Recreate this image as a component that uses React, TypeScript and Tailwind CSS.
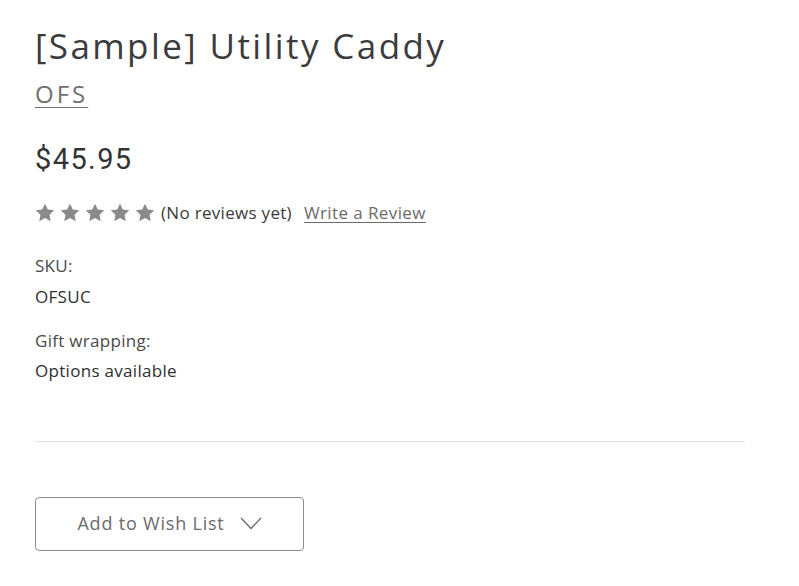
import React from "react";

function Star() {
  return (
    <svg width="20" height="19" viewBox="0 0 24 23" className="block">
      <path
        d="M12 0.8l3.4 7.1 7.8 1-5.7 5.4 1.4 7.7L12 18.3 5.1 22l1.4-7.7L0.8 8.9l7.8-1z"
        fill="#8a8a8a"
      />
    </svg>
  );
}

export default function App() {
  const heading = { fontFamily: "'Open Sans', 'DejaVu Sans', sans-serif" };
  const body = { fontFamily: "'Open Sans', 'Liberation Sans', sans-serif" };

  return (
    <div className="min-h-[586px] w-full bg-white pl-[35px] pr-[54px] pt-[23px]">
      <h1
        className="text-[35px] leading-[46px] font-normal tracking-[2.4px] text-[#3b3b3b]"
        style={heading}
      >
        [Sample] Utility Caddy
      </h1>
      <a
        href="#"
        className="mt-[10px] inline-block text-[24px] leading-[30px] tracking-[3px] text-[#707070] underline decoration-1 underline-offset-[4px]"
        style={heading}
      >
        OFS
      </a>

      <div
        className="mt-[33px] text-[29px] leading-[34px] tracking-[1.4px] text-[#333]"
        style={{ fontFamily: "Roboto, 'Liberation Sans', sans-serif" }}
      >
        $45.95
      </div>

      <div className="mt-[24px] flex items-center" style={body}>
        <div className="flex gap-[5px]">
          <Star />
          <Star />
          <Star />
          <Star />
          <Star />
        </div>
        <span className="ml-[6px] text-[17px] tracking-[0.3px] text-[#3b3b3b]">
          (No reviews yet)
        </span>
        <a
          href="#"
          className="ml-[12px] text-[17px] tracking-[0.4px] text-[#6b6b6b] underline underline-offset-[3px]"
        >
          Write a Review
        </a>
      </div>

      <dl className="mt-[29px] text-[17px] tracking-[0.3px]" style={body}>
        <dt className="leading-[22px] text-[#4a4a4a]">SKU:</dt>
        <dd className="mt-[9px] leading-[22px] text-[#2f2f2f]">OFSUC</dd>
        <dt className="mt-[22px] leading-[22px] text-[#4a4a4a]">Gift wrapping:</dt>
        <dd className="mt-[8px] leading-[22px] text-[#2f2f2f]">Options available</dd>
      </dl>

      <hr className="mt-[59px] border-0 border-t border-[#e2e2e2]" />

      <button
        type="button"
        className="mt-[55px] flex h-[54px] w-[269px] items-center justify-center gap-[15px] rounded-[4px] border border-[#8c8c8c] bg-white text-[18px] tracking-[0.8px] text-[#6b6b6b]"
        style={heading}
      >
        Add to Wish List
        <svg width="22" height="13" viewBox="0 0 22 13" fill="none">
          <path d="M1 1l10 10.5L21 1" stroke="#6b6b6b" strokeWidth="1.3" />
        </svg>
      </button>
    </div>
  );
}
